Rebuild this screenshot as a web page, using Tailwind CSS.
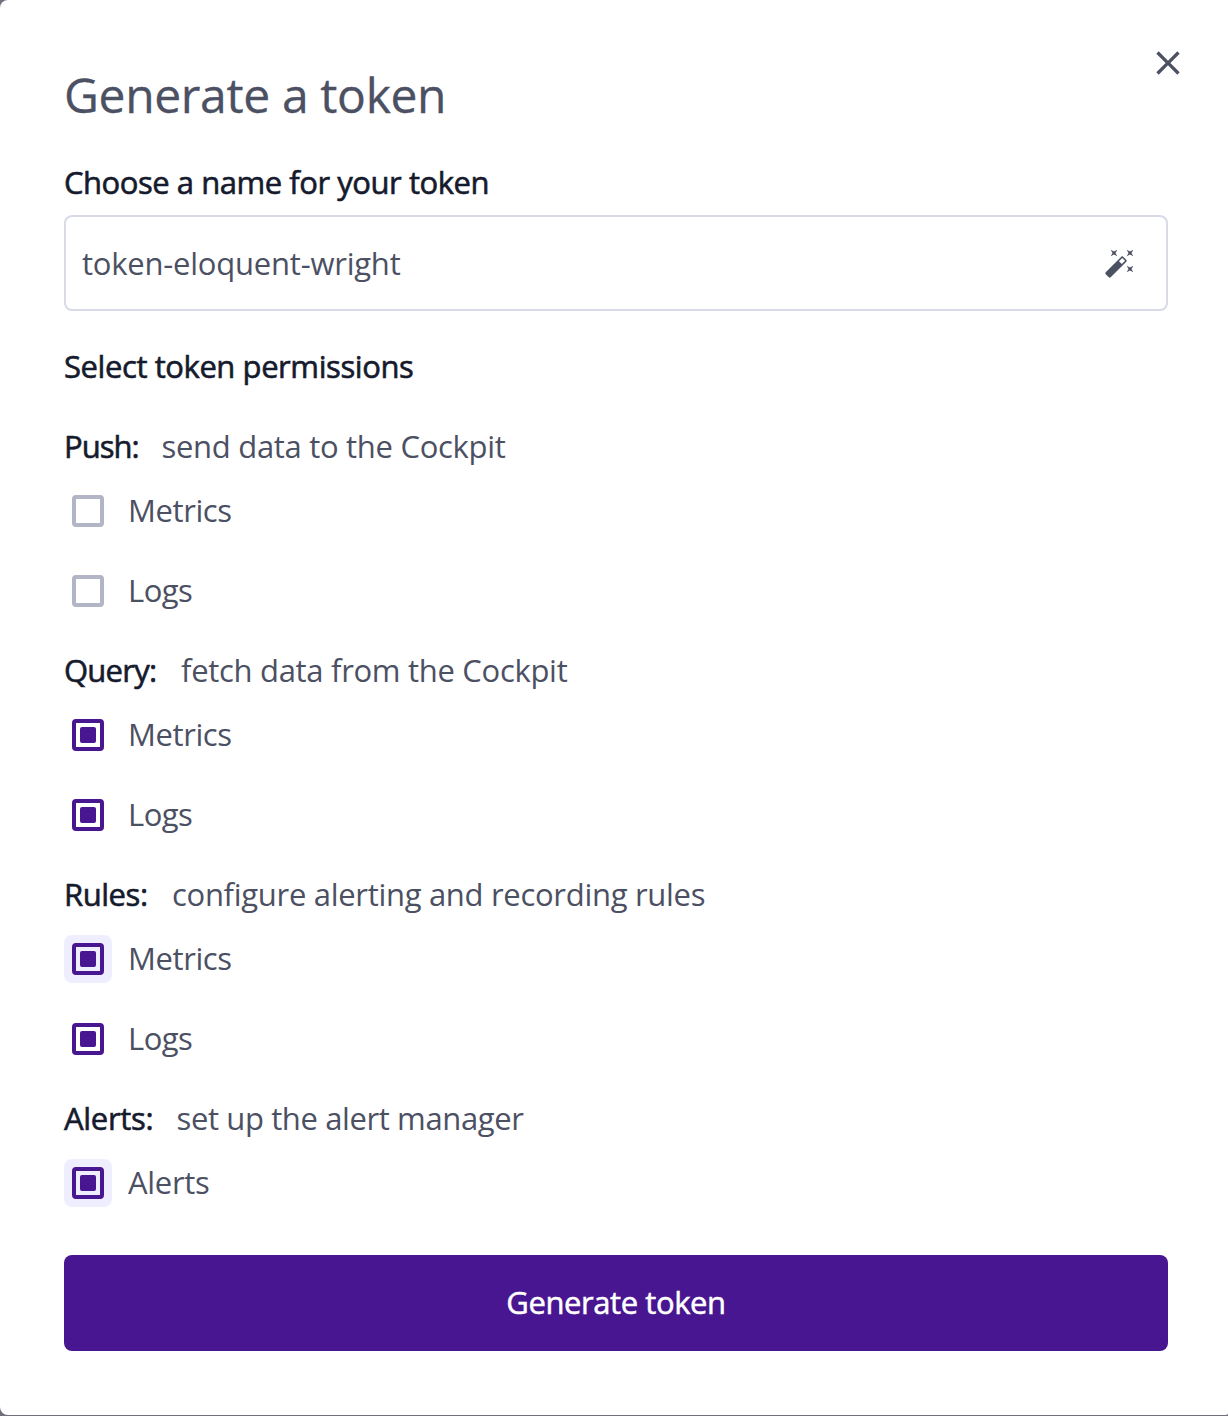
<!DOCTYPE html>
<html lang="en">
<head>
<meta charset="utf-8">
<title>Generate a token</title>
<script src="https://cdn.jsdelivr.net/npm/@tailwindcss/browser@4"></script>
</head>
<body class="h-[1416px] w-[1228px] overflow-hidden bg-[#6f707c] font-['Open_Sans',sans-serif] text-[31px] leading-[48px] tracking-[-0.3px] text-[#4c5063]">
<main class="relative flex h-[1415px] flex-col rounded-l-lg rounded-br-[2px] bg-white pt-[63px] pr-[60px] pl-16">
  <button aria-label="Close" class="absolute top-[43px] right-10 size-10">
    <svg viewBox="0 0 24 24" class="size-10" fill="currentColor"><path d="M19,6.41L17.59,5L12,10.59L6.41,5L5,6.41L10.59,12L5,17.59L6.41,19L12,13.41L17.59,19L19,17.59L13.41,12L19,6.41Z"/></svg>
  </button>
  <h1 class="text-[48px] leading-[64px] tracking-[-0.35px] [-webkit-text-stroke:0.3px]">Generate a token</h1>
  <label for="name" class="mt-[31px] tracking-[-0.46px] text-[#151a2d] [-webkit-text-stroke:0.6px]">Choose a name for your token</label>
  <div class="mt-[9px] flex h-24 items-center justify-between rounded-lg border-2 border-[#d8dae8] pr-[30px] pl-4">
    <input id="name" value="token-eloquent-wright" class="h-12 flex-1 tracking-[-0.22px] outline-none">
    <svg viewBox="0 0 24 24" class="size-8" fill="currentColor"><path d="M7.5,5.6L5,7L6.4,4.5L5,2L7.5,3.4L10,2L8.6,4.5L10,7L7.5,5.6M19.5,15.4L22,14L20.6,16.5L22,19L19.5,17.6L17,19L18.4,16.5L17,14L19.5,15.4M22,2L20.6,4.5L22,7L19.5,5.6L17,7L18.4,4.5L17,2L19.5,3.4L22,2M13.34,12.78L15.78,10.34L13.66,8.22L11.22,10.66L13.34,12.78M14.37,7.29L16.71,9.63C17.1,10 17.1,10.65 16.71,11.04L5.04,22.71C4.65,23.1 4,23.1 3.63,22.71L1.29,20.37C0.9,20 0.9,19.35 1.29,18.96L12.96,7.29C13.35,6.9 14,6.9 14.37,7.29Z"/></svg>
  </div>
  <h2 class="mt-[31px] tracking-[-0.42px] text-[#151a2d] [-webkit-text-stroke:0.6px]">Select token permissions</h2>

  <div class="mt-8 flex flex-col gap-8">
    <section>
      <div class="flex h-[49px]"><h3 class="w-[97.5px] tracking-[-1px] text-[#151a2d] [-webkit-text-stroke:0.6px]">Push:</h3><p>send data to the Cockpit</p></div>
      <div class="mt-4 flex flex-col gap-8">
        <label class="flex h-12 gap-4"><span class="flex size-12 items-center justify-center"><span class="size-8 rounded-sm border-4 border-[#b2b5c6]"></span></span><span class="-mt-px tracking-[-0.4px]">Metrics</span></label>
        <label class="flex h-12 gap-4"><span class="flex size-12 items-center justify-center"><span class="size-8 rounded-sm border-4 border-[#b2b5c6]"></span></span><span class="-mt-px tracking-[-0.55px]">Logs</span></label>
      </div>
    </section>
    <section class="-mt-px">
      <div class="flex h-[49px]"><h3 class="w-[117px] tracking-[-0.75px] text-[#151a2d] [-webkit-text-stroke:0.6px]">Query:</h3><p>fetch data from the Cockpit</p></div>
      <div class="mt-4 flex flex-col gap-8">
        <label class="flex h-12 gap-4"><span class="flex size-12 items-center justify-center"><span class="flex size-8 items-center justify-center rounded-sm border-4 border-[#481690]"><span class="size-4 rounded-[2px] bg-[#481690]"></span></span></span><span class="-mt-px tracking-[-0.4px]">Metrics</span></label>
        <label class="flex h-12 gap-4"><span class="flex size-12 items-center justify-center"><span class="flex size-8 items-center justify-center rounded-sm border-4 border-[#481690]"><span class="size-4 rounded-[2px] bg-[#481690]"></span></span></span><span class="-mt-px tracking-[-0.55px]">Logs</span></label>
      </div>
    </section>
    <section class="-mt-px">
      <div class="flex h-[49px]"><h3 class="w-[108px] tracking-[-0.45px] text-[#151a2d] [-webkit-text-stroke:0.6px]">Rules:</h3><p>configure alerting and recording rules</p></div>
      <div class="mt-4 flex flex-col gap-8">
        <label class="flex h-12 gap-4"><span class="flex size-12 items-center justify-center rounded-lg bg-[#eeeeff]"><span class="flex size-8 items-center justify-center rounded-sm border-4 border-[#481690]"><span class="size-4 rounded-[2px] bg-[#481690]"></span></span></span><span class="-mt-px tracking-[-0.4px]">Metrics</span></label>
        <label class="flex h-12 gap-4"><span class="flex size-12 items-center justify-center"><span class="flex size-8 items-center justify-center rounded-sm border-4 border-[#481690]"><span class="size-4 rounded-[2px] bg-[#481690]"></span></span></span><span class="-mt-px tracking-[-0.55px]">Logs</span></label>
      </div>
    </section>
    <section class="-mt-px">
      <div class="flex h-[49px]"><h3 class="w-[112.5px] text-[#151a2d] [-webkit-text-stroke:0.6px]">Alerts:</h3><p class="tracking-[-0.38px]">set up the alert manager</p></div>
      <label class="mt-4 flex h-12 gap-4"><span class="flex size-12 items-center justify-center rounded-lg bg-[#eeeeff]"><span class="flex size-8 items-center justify-center rounded-sm border-4 border-[#481690]"><span class="size-4 rounded-[2px] bg-[#481690]"></span></span></span><span class="-mt-px">Alerts</span></label>
    </section>
  </div>
  <button class="mt-12 h-24 shrink-0 rounded-lg bg-[#481690] pb-0.5 tracking-[-0.42px] text-white [-webkit-text-stroke:0.5px]">Generate token</button>
</main>
</body>
</html>
